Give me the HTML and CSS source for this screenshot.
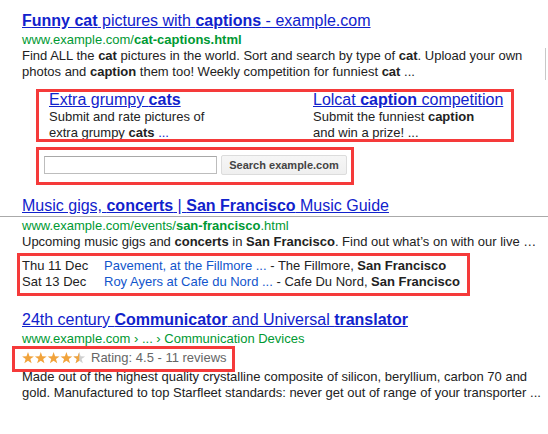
FILE: index.html
```html
<!DOCTYPE html>
<html lang="en">
<head>
<meta charset="utf-8">
<title>Rich snippets</title>
<link rel="stylesheet" href="styles.css">
</head>
<body>
<div class="page">
  <div class="result r1">
    <h3 class="title"><a href="#"><b>Funny cat</b> pictures with <b>captions</b> - example.com</a></h3>
    <div class="url">www.example.com/<b>cat-captions.html</b></div>
    <div class="snippet edge">Find ALL the <b>cat</b> pictures in the world. Sort and search by type of <b>cat</b>. Upload your own photos and <b>caption</b> them too! Weekly competition for funniest <b>cat</b> ...</div>
    <div class="sitelinks mark">
      <div class="sitelink">
        <a class="sl-title" href="#">Extra grumpy <b>cats</b></a>
        <div class="sl-desc">Submit and rate pictures of extra grumpy <b>cats</b> <span class="more">...</span></div>
      </div>
      <div class="sitelink">
        <a class="sl-title" href="#">Lolcat <b>caption</b> competition</a>
        <div class="sl-desc">Submit the funniest <b>caption</b> and win a prize! ...</div>
      </div>
    </div>
    <form class="sitesearch mark">
      <input class="ss-input" type="text" aria-label="Search example.com">
      <button class="ss-btn" type="button">Search example.com</button>
    </form>
  </div>

  <div class="result r2">
    <h3 class="title"><a href="#">Music gigs, <b>concerts</b> | <b>San Francisco</b> Music Guide</a></h3>
    <div class="rule"></div>
    <div class="url">www.example.com/events/<b>san-francisco</b>.html</div>
    <div class="snippet">Upcoming music gigs and <b>concerts</b> in <b>San Francisco</b>. Find out what’s on with our live …</div>
    <div class="events mark">
      <span class="ev-date">Thu 11 Dec</span>
      <span class="ev-info"><a href="#">Pavement, at the Fillmore ...</a> - The Fillmore, <b>San Francisco</b></span>
      <span class="ev-date">Sat 13 Dec</span>
      <span class="ev-info"><a href="#">Roy Ayers at Cafe du Nord ...</a> - Cafe Du Nord, <b>San Francisco</b></span>
    </div>
  </div>

  <div class="result r3">
    <h3 class="title"><a href="#">24th century <b>Communicator</b> and Universal <b>translator</b></a></h3>
    <div class="url">www.example.com › ... › Communication Devices</div>
    <div class="rating mark">
      <svg class="stars" width="64" height="12" viewBox="0 0 64 12" aria-hidden="true">
        <defs>
          <polygon id="st" points="6,0.1 7.47,4.28 11.9,4.38 8.38,7.07 9.64,11.32 6,8.8 2.36,11.32 3.62,7.07 0.1,4.38 4.53,4.28"/>
          <clipPath id="half"><rect x="0" y="0" width="6" height="12"/></clipPath>
        </defs>
        <g fill="#f1a33b">
          <use href="#st"/>
          <use href="#st" x="12.8"/>
          <use href="#st" x="25.6"/>
          <use href="#st" x="38.4"/>
        </g>
        <g transform="translate(51.2 0)">
          <use href="#st" fill="#cfcfcf"/>
          <use href="#st" fill="#f1a33b" clip-path="url(#half)"/>
        </g>
      </svg>
      <span>Rating: 4.5 - 11 reviews</span>
    </div>
    <div class="snippet s3">Made out of the highest quality crystalline composite of silicon, beryllium, carbon 70 and gold. Manufactured to top Starfleet standards: never get out of range of your transporter ...</div>
  </div>
</div>
</body>
</html>
```

FILE: styles.css
```css
* {
  box-sizing: border-box;
}

html,
body {
  margin: 0;
  padding: 0;
  background: #fff;
}

body {
  width: 548px;
  height: 434px;
  overflow: hidden;
  font-family: "Liberation Sans", Arial, sans-serif;
  font-size: 13px;
  color: #222;
}

.page {
  padding: 11px 0 0 22px;
}

.title {
  margin: 0;
  font-size: 16px;
  font-weight: normal;
  line-height: 19px;
  white-space: nowrap;
}

.title a {
  color: #12c;
  text-decoration: underline;
}

.url {
  margin-top: 2px;
  line-height: 16px;
  color: #093;
  white-space: nowrap;
}

.snippet {
  line-height: 16px;
  margin-right: 2px;
}

.edge {
  border-right: 1px solid #c8c8c8;
}

a {
  color: #12c;
}

/* red highlight frames drawn over the content */
.mark {
  position: relative;
}

.mark::after {
  content: "";
  position: absolute;
  border: 3px solid #f53a3a;
  pointer-events: none;
}

/* sitelinks */
.sitelinks {
  margin: 11px 0 0 14px;
  width: 478px;
  padding-left: 13px;
  display: grid;
  grid-template-columns: 264px 1fr;
}

.sitelinks::after {
  top: -2px;
  bottom: -1px;
  left: 0;
  right: 0;
}

.sl-title {
  display: block;
  font-size: 16px;
  line-height: 18px;
  white-space: nowrap;
  text-decoration: underline;
}

.sl-desc {
  width: 175px;
  line-height: 16px;
}

.more {
  color: #12c;
}

/* site search box */
.sitesearch {
  margin: 6px 0 0 14px;
  width: 318px;
  padding: 8px 0 10px 8px;
  display: flex;
  align-items: center;
  gap: 4px;
}

.sitesearch::after {
  top: 0;
  bottom: 0;
  left: 0;
  right: 0;
}

.ss-input {
  width: 173px;
  height: 18px;
  margin: 0;
  padding: 0 4px;
  border: 1px solid #bdbdbd;
  border-top-color: #a8a8a8;
  background: #fff;
  font: 13px "Liberation Sans", Arial, sans-serif;
}

.ss-btn {
  width: 126px;
  height: 20px;
  margin: 0;
  padding: 0;
  border: 1px solid #dcdcdc;
  border-radius: 2px;
  background: linear-gradient(#f6f6f6, #efefef);
  color: #444;
  font: bold 11px "Liberation Sans", Arial, sans-serif;
}

/* result 2 */
.r2 {
  margin-top: 11px;
}

.rule {
  margin: 1px 0 0 -22px;
  border-top: 1px solid #aaa;
}

.r2 .url {
  margin-top: 1px;
}

.events {
  margin-top: 8px;
  width: fit-content;
  display: grid;
  grid-template-columns: 82px auto;
  line-height: 16px;
  white-space: nowrap;
}

.events a {
  color: #15c;
  text-decoration: none;
}

.events::after {
  top: -5px;
  bottom: -6px;
  left: -5px;
  right: -10px;
}

/* result 3 */
.r3 {
  margin-top: 20px;
}

.rating {
  margin-top: 2px;
  width: fit-content;
  display: flex;
  align-items: center;
  gap: 5px;
  line-height: 18px;
  color: #666;
}

.stars {
  display: block;
}

.rating::after {
  top: -3px;
  bottom: -5px;
  left: -10px;
  right: -8px;
}

.s3 {
  margin-top: 2px;
}
```
